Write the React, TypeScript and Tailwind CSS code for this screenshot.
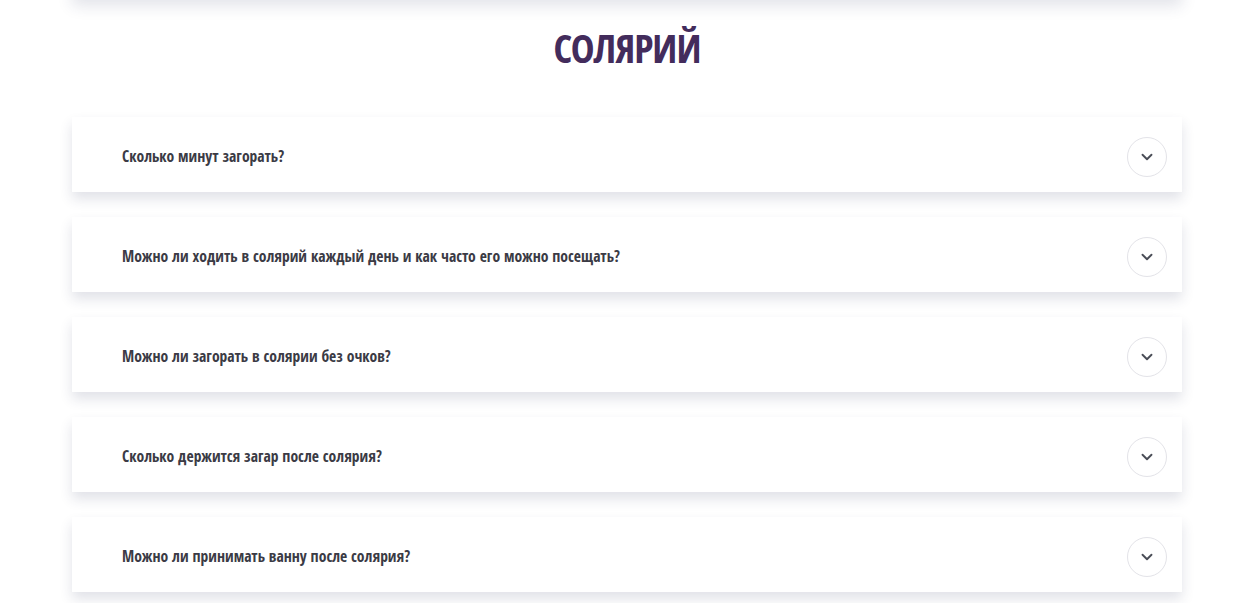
import { ChevronDown } from 'lucide-react';

const questions = [
  'Сколько минут загорать?',
  'Можно ли ходить в солярий каждый день и как часто его можно посещать?',
  'Можно ли загорать в солярии без очков?',
  'Сколько держится загар после солярия?',
  'Можно ли принимать ванну после солярия?',
];

export default function App() {
  return (
    <div className="min-h-screen overflow-hidden bg-white font-['Open_Sans_Condensed','Roboto_Condensed',sans-serif]">
      <div className="ml-[72px] w-[1110px]">
        {/* tail of the previous block */}
        <div className="-mt-[60px] h-[60px] bg-white shadow-[0_6px_14px_rgba(40,50,90,0.13)]" />

        <h2 className="mt-[24px] text-center text-[40px] leading-[48px] font-semibold tracking-[-1px] text-[#432c5c]">
          СОЛЯРИЙ
        </h2>

        <div className="mt-[45px] flex flex-col gap-[25px] pb-10">
          {questions.map((q) => (
            <div
              key={q}
              className="flex h-[75px] items-center justify-between bg-white pt-[5px] pl-[50px] pr-[15px] shadow-[0_7px_12px_rgba(40,50,90,0.14)]"
            >
              <span className="text-[15.6px] font-bold text-[#3b3b45]">{q}</span>
              <button className="flex h-10 w-10 items-center justify-center rounded-full border border-[#e3e3e8] bg-white">
                <ChevronDown className="h-[18px] w-[18px] text-[#4a4d57]" strokeWidth={2.5} />
              </button>
            </div>
          ))}
        </div>
      </div>
    </div>
  );
}
